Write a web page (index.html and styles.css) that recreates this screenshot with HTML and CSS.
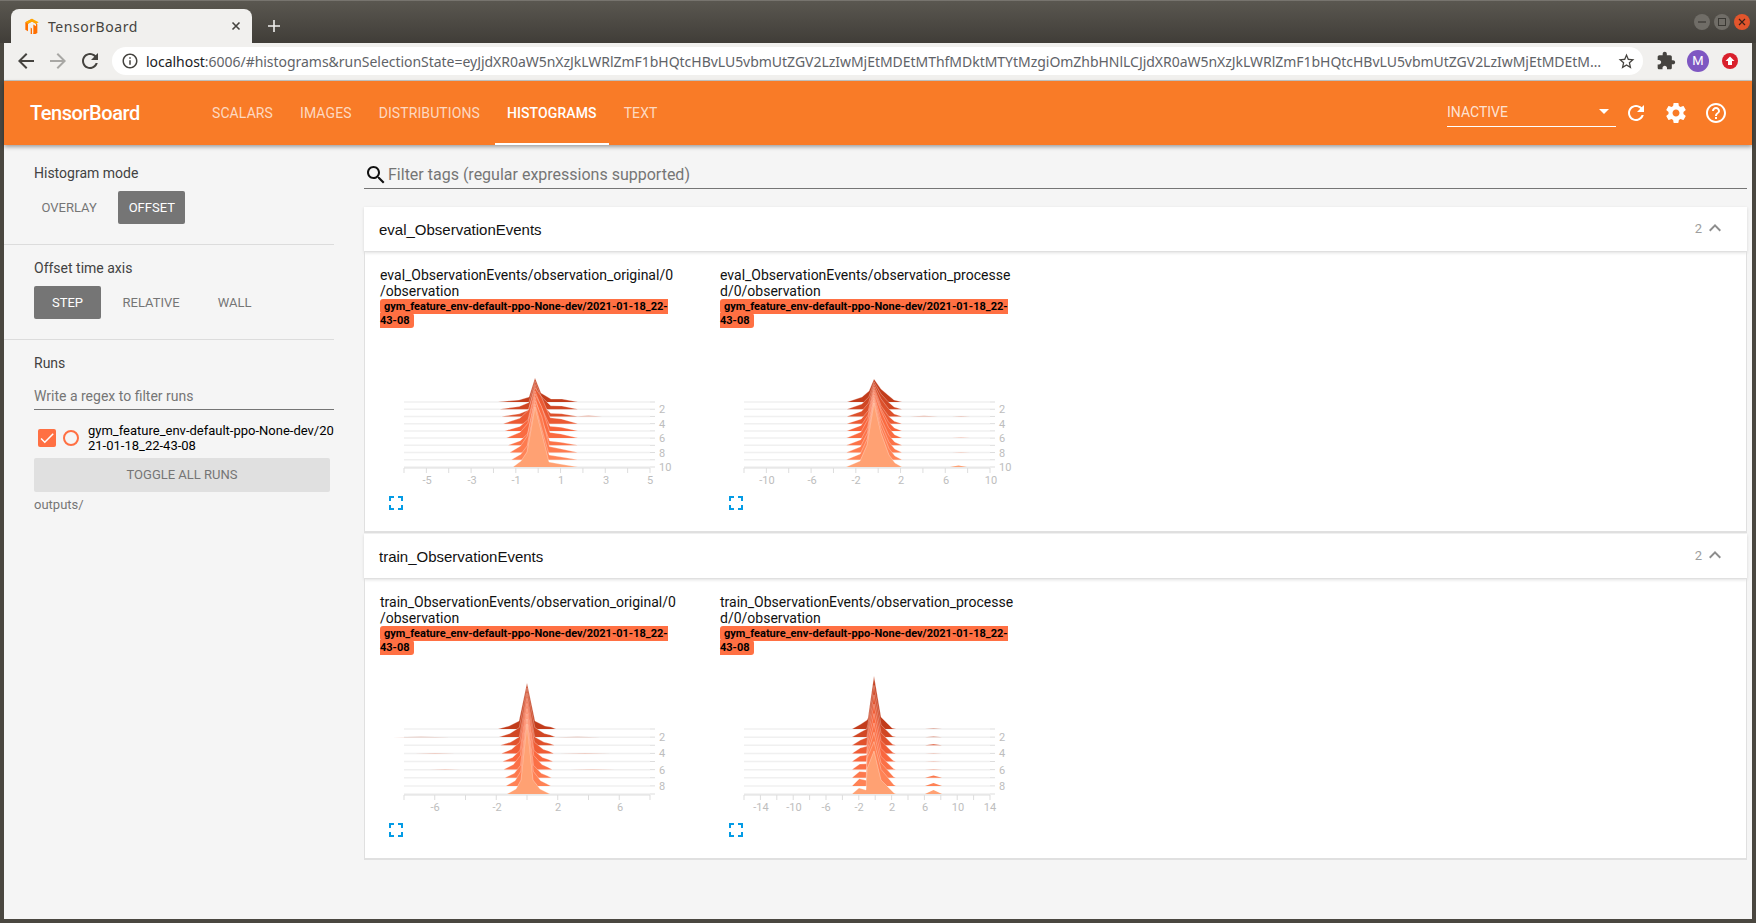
FILE: index.html
```html
<!DOCTYPE html>
<html lang="en">
<head>
  <meta charset="UTF-8" />
  <title>TensorBoard</title>
  <link rel="stylesheet" href="styles.css">
</head>
<body>
  <div class="titlebar">
    <div class="tab">
      <svg class="favicon" viewBox="0 0 24 24"><path fill="#ff6f00" d="M12 1 2 6.5v11l4 2.3v-11l6-3.4 6 3.4v3.4l-4-2.3v13.5l-2 1.2v-9l-2-1.2v11.4l2 1.2 8-4.6v-13z"/><path fill="#ffa800" d="M12 1 2 6.5l4 2.3 6-3.4 6 3.4 4-2.3z"/></svg>
      <span class="tab-title">TensorBoard</span>
      <svg class="tab-close" viewBox="0 0 10 10"><path d="M1.5 1.5l7 7M8.5 1.5l-7 7" stroke="#45433f" stroke-width="1.6"/></svg>
    </div>
    <svg class="new-tab" viewBox="0 0 12 12"><path d="M6 0v12M0 6h12" stroke="#f1f0ee" stroke-width="1.6"/></svg>
    <div class="win-controls">
      <span class="win-btn"><svg viewBox="0 0 10 10"><path d="M1 5h8" stroke="#3a3833" stroke-width="1.2"/></svg></span>
      <span class="win-btn"><svg viewBox="0 0 10 10"><rect x="1.5" y="1.5" width="7" height="7" fill="none" stroke="#3a3833" stroke-width="1"/></svg></span>
      <span class="win-btn close"><svg viewBox="0 0 10 10"><path d="M2 2l6 6M8 2l-6 6" stroke="#3a2018" stroke-width="1.2"/></svg></span>
    </div>
  </div>

  <div class="window">
    <div class="toolbar">
      <svg class="tb-icon" viewBox="0 0 24 24"><path fill="#45433f" d="M20 11H7.83l5.59-5.59L12 4l-8 8 8 8 1.41-1.41L7.83 13H20v-2z"/></svg>
      <svg class="tb-icon" viewBox="0 0 24 24"><path fill="#a8a7a4" d="M12 4l-1.41 1.41L16.17 11H4v2h12.17l-5.58 5.59L12 20l8-8z"/></svg>
      <svg class="tb-icon" viewBox="0 0 24 24"><path fill="#45433f" d="M17.65 6.35C16.2 4.9 14.21 4 12 4c-4.42 0-7.99 3.58-7.99 8s3.57 8 7.99 8c3.73 0 6.84-2.55 7.73-6h-2.08c-.82 2.33-3.04 4-5.65 4-3.31 0-6-2.69-6-6s2.69-6 6-6c1.66 0 3.14.69 4.22 1.78L13 11h7V4l-2.35 2.35z"/></svg>
      <div class="omnibox">
        <svg class="info-icon" viewBox="0 0 24 24"><path fill="#45433f" d="M11 7h2v2h-2zm0 4h2v6h-2zm1-9C6.48 2 2 6.48 2 12s4.48 10 10 10 10-4.48 10-10S17.52 2 12 2zm0 18c-4.41 0-8-3.59-8-8s3.59-8 8-8 8 3.59 8 8-3.59 8-8 8z"/></svg>
        <div class="url"><span class="host">localhost</span>:6006/#histograms&amp;runSelectionState=eyJjdXR0aW5nXzJkLWRlZmF1bHQtcHBvLU5vbmUtZGV2LzIwMjEtMDEtMThfMDktMTYtMzgiOmZhbHNlLCJjdXR0aW5nXzJkLWRlZmF1bHQtcHBvLU5vbmUtZGV2LzIwMjEtMDEtM…</div>
        <svg class="star-icon" viewBox="0 0 24 24"><path fill="#45433f" d="M22 9.24l-7.19-.62L12 2 9.19 8.63 2 9.24l5.46 4.73L5.82 21 12 17.27 18.18 21l-1.63-7.03L22 9.24zM12 15.4l-3.76 2.27 1-4.28-3.32-2.88 4.38-.38L12 6.1l1.71 4.04 4.38.38-3.32 2.88 1 4.28L12 15.4z"/></svg>
      </div>
      <svg class="puzzle-icon" viewBox="0 0 24 24"><path fill="#45433f" d="M20.5 11H19V7c0-1.1-.9-2-2-2h-4V3.5C13 2.12 11.88 1 10.5 1S8 2.12 8 3.5V5H4c-1.1 0-1.99.9-1.99 2v3.8H3.5c1.49 0 2.7 1.21 2.7 2.7s-1.21 2.7-2.7 2.7H2V20c0 1.1.9 2 2 2h3.8v-1.5c0-1.49 1.21-2.7 2.7-2.7 1.49 0 2.7 1.21 2.7 2.7V22H17c1.1 0 2-.9 2-2v-4h1.5c1.38 0 2.5-1.12 2.5-2.5S21.88 11 20.5 11z"/></svg>
      <span class="avatar">M</span>
      <svg class="update-icon" viewBox="0 0 16 16"><circle cx="8" cy="8" r="8" fill="#d9202c"/><path fill="#fff" d="M8 3.5 12.5 8H10v4H6V8H3.5z"/></svg>
    </div>

    <header class="tb-header">
      <div class="brand">TensorBoard</div>
      <nav class="tb-tabs">
        <a class="tb-tab">SCALARS</a>
        <a class="tb-tab">IMAGES</a>
        <a class="tb-tab">DISTRIBUTIONS</a>
        <a class="tb-tab active">HISTOGRAMS</a>
        <a class="tb-tab">TEXT</a>
      </nav>
      <div class="tb-right">
        <div class="plugin-select">
          <span>INACTIVE</span>
          <svg class="caret" viewBox="0 0 10 5"><path fill="#fff" d="M0 0l5 5 5-5z"/></svg>
        </div>
        <svg class="hd-icon" viewBox="0 0 24 24"><path fill="#fff" d="M17.65 6.35C16.2 4.9 14.21 4 12 4c-4.42 0-7.99 3.58-7.99 8s3.57 8 7.99 8c3.73 0 6.84-2.55 7.73-6h-2.08c-.82 2.33-3.04 4-5.65 4-3.31 0-6-2.69-6-6s2.69-6 6-6c1.66 0 3.14.69 4.22 1.78L13 11h7V4l-2.35 2.35z"/></svg>
        <svg class="hd-icon" viewBox="0 0 24 24"><path fill="#fff" d="M19.43 12.98c.04-.32.07-.64.07-.98s-.03-.66-.07-.98l2.11-1.65c.19-.15.24-.42.12-.64l-2-3.46c-.12-.22-.39-.3-.61-.22l-2.49 1c-.52-.4-1.08-.73-1.69-.98l-.38-2.65C14.46 2.18 14.25 2 14 2h-4c-.25 0-.46.18-.49.42l-.38 2.65c-.61.25-1.17.59-1.69.98l-2.49-1c-.23-.09-.49 0-.61.22l-2 3.46c-.13.22-.07.49.12.64l2.11 1.65c-.04.32-.07.65-.07.98s.03.66.07.98l-2.11 1.65c-.19.15-.24.42-.12.64l2 3.46c.12.22.39.3.61.22l2.49-1c.52.4 1.08.73 1.69.98l.38 2.65c.03.24.24.42.49.42h4c.25 0 .46-.18.49-.42l.38-2.65c.61-.25 1.17-.59 1.69-.98l2.49 1c.23.09.49 0 .61-.22l2-3.46c.12-.22.07-.49-.12-.64l-2.11-1.65zM12 15.5c-1.93 0-3.5-1.57-3.5-3.5s1.57-3.5 3.5-3.5 3.5 1.57 3.5 3.5-1.57 3.5-3.5 3.5z"/></svg>
        <svg class="hd-icon" viewBox="0 0 24 24"><path fill="#fff" d="M11 18h2v-2h-2v2zm1-16C6.48 2 2 6.48 2 12s4.48 10 10 10 10-4.48 10-10S17.52 2 12 2zm0 18c-4.41 0-8-3.59-8-8s3.59-8 8-8 8 3.59 8 8-3.59 8-8 8zm0-14c-2.21 0-4 1.79-4 4h2c0-1.1.9-2 2-2s2 .9 2 2c0 2-3 1.75-3 5h2c0-2.25 3-2.5 3-5 0-2.21-1.79-4-4-4z"/></svg>
      </div>
    </header>

    <div class="content">
      <aside class="sidebar">
        <section class="sb-section">
          <div class="sb-label">Histogram mode</div>
          <div class="btn-group">
            <button class="btn">OVERLAY</button>
            <button class="btn selected">OFFSET</button>
          </div>
        </section>
        <section class="sb-section">
          <div class="sb-label">Offset time axis</div>
          <div class="btn-group">
            <button class="btn selected">STEP</button>
            <button class="btn">RELATIVE</button>
            <button class="btn">WALL</button>
          </div>
        </section>
        <section class="sb-runs">
          <div class="sb-label">Runs</div>
          <div class="run-filter">Write a regex to filter runs</div>
          <div class="run-row">
            <span class="run-check"><svg viewBox="0 0 24 24"><path fill="#fff" d="M9 16.17L4.83 12l-1.42 1.41L9 19 21 7l-1.41-1.41z"/></svg></span>
            <span class="run-radio"></span>
            <span class="run-name">gym_feature_env-default-ppo-None-dev/2021-01-18_22-43-08</span>
          </div>
          <button class="toggle-runs">TOGGLE ALL RUNS</button>
          <div class="run-dir">outputs/</div>
        </section>
      </aside>

      <main class="main">
        <div class="tag-filter">
          <svg class="search-icon" viewBox="3 3 18 18"><path fill="#111" d="M15.5 14h-.79l-.28-.27C15.41 12.59 16 11.11 16 9.5 16 5.91 13.09 3 9.5 3S3 5.91 3 9.5 5.91 16 9.5 16c1.61 0 3.09-.59 4.23-1.57l.27.28v.79l5 4.99L20.49 19l-4.99-5zm-6 0C7.01 14 5 11.99 5 9.5S7.01 5 9.5 5 14 7.01 14 9.5 11.99 14 9.5 14z"/></svg>
          <span>Filter tags (regular expressions supported)</span>
        </div>

        <section class="card">
          <div class="card-head">
            <span class="card-name">eval_ObservationEvents</span>
            <span class="card-count">2</span>
            <svg class="chevron" viewBox="6 8 12 8"><path fill="#8d8d8d" d="M7.41 15.41L12 10.83l4.59 4.58L18 14l-6-6-6 6z"/></svg>
          </div>
          <div class="card-body">
            <div class="tile">
              <div class="tile-title">eval_ObservationEvents/observation_original/0<wbr>/observation</div>
              <div class="tile-run"><span>gym_feature_env-default-ppo-None-dev/2021-01-18_22-43-08</span></div>
              <svg class="chart" data-chart="evalOriginal" width="300" height="161"></svg>
              <svg class="expand" viewBox="5 5 14 14"><path fill="#039be5" d="M7 14H5v5h5v-2H7v-3zm-2-4h2V7h3V5H5v5zm12 7h-3v2h5v-5h-2v3zM14 5v2h3v3h2V5h-5z"/></svg>
            </div>
            <div class="tile">
              <div class="tile-title">eval_ObservationEvents/observation_processed/0/observation</div>
              <div class="tile-run"><span>gym_feature_env-default-ppo-None-dev/2021-01-18_22-43-08</span></div>
              <svg class="chart" data-chart="evalProcessed" width="300" height="161"></svg>
              <svg class="expand" viewBox="5 5 14 14"><path fill="#039be5" d="M7 14H5v5h5v-2H7v-3zm-2-4h2V7h3V5H5v5zm12 7h-3v2h5v-5h-2v3zM14 5v2h3v3h2V5h-5z"/></svg>
            </div>
          </div>
        </section>

        <section class="card">
          <div class="card-head">
            <span class="card-name">train_ObservationEvents</span>
            <span class="card-count">2</span>
            <svg class="chevron" viewBox="6 8 12 8"><path fill="#8d8d8d" d="M7.41 15.41L12 10.83l4.59 4.58L18 14l-6-6-6 6z"/></svg>
          </div>
          <div class="card-body">
            <div class="tile">
              <div class="tile-title">train_ObservationEvents/observation_original/0<wbr>/observation</div>
              <div class="tile-run"><span>gym_feature_env-default-ppo-None-dev/2021-01-18_22-43-08</span></div>
              <svg class="chart" data-chart="trainOriginal" width="300" height="161"></svg>
              <svg class="expand" viewBox="5 5 14 14"><path fill="#039be5" d="M7 14H5v5h5v-2H7v-3zm-2-4h2V7h3V5H5v5zm12 7h-3v2h5v-5h-2v3zM14 5v2h3v3h2V5h-5z"/></svg>
            </div>
            <div class="tile">
              <div class="tile-title">train_ObservationEvents/observation_processed/0/observation</div>
              <div class="tile-run"><span>gym_feature_env-default-ppo-None-dev/2021-01-18_22-43-08</span></div>
              <svg class="chart" data-chart="trainProcessed" width="300" height="161"></svg>
              <svg class="expand" viewBox="5 5 14 14"><path fill="#039be5" d="M7 14H5v5h5v-2H7v-3zm-2-4h2V7h3V5H5v5zm12 7h-3v2h5v-5h-2v3zM14 5v2h3v3h2V5h-5z"/></svg>
            </div>
          </div>
        </section>
      </main>
    </div>
  </div>

  <script src="charts.js"></script>
</body>
</html>
```

FILE: styles.css
```css
* {
  box-sizing: border-box;
}
body {
  margin: 0;
  height: 923px;
  overflow: hidden;
  display: flex;
  flex-direction: column;
  background: #4a4740;
  font-family: Roboto, sans-serif;
}

/* browser chrome */
.titlebar {
  height: 43px;
  flex: none;
  display: flex;
  align-items: flex-end;
  padding-left: 11px;
  border-top: 1px solid #77746e;
  background: linear-gradient(#5a5750, #403d38);
}
.tab {
  width: 241px;
  height: 34px;
  display: flex;
  align-items: center;
  padding: 0 11px 0 13px;
  background: #f1f0ee;
  border-radius: 8px 8px 0 0;
}
.favicon {
  width: 16px;
  height: 16px;
}
.tab-title {
  flex: 1;
  margin-left: 8px;
  font-family: "Noto Sans", sans-serif;
  font-size: 14px;
  letter-spacing: 0.55px;
  color: #45433f;
}
.tab-close {
  width: 10px;
  height: 10px;
}
.new-tab {
  width: 12px;
  height: 12px;
  margin: 0 0 11px 16px;
}
.win-controls {
  margin-left: auto;
  align-self: center;
  display: flex;
  gap: 4px;
  padding-right: 6px;
}
.win-btn {
  width: 16px;
  height: 16px;
  display: flex;
  align-items: center;
  justify-content: center;
  border-radius: 50%;
  background: #706d67;
}
.win-btn svg {
  width: 10px;
  height: 10px;
}
.win-btn.close {
  background: #e2552c;
}

.window {
  flex: 1;
  margin: 0 4px 4px;
  display: flex;
  flex-direction: column;
  background: #f5f5f5;
  min-height: 0;
}
.toolbar {
  height: 38px;
  flex: none;
  display: flex;
  align-items: center;
  padding: 0 0 1px 10px;
  background: #f1f0ee;
  border-bottom: 1px solid #c6c6c4;
}
.tb-icon {
  width: 24px;
  height: 24px;
  margin-right: 8px;
}
.omnibox {
  width: 1531px;
  height: 28px;
  margin-left: 2px;
  display: flex;
  align-items: center;
  padding: 0 7px 0 9px;
  background: #fff;
  border-radius: 14px;
}
.info-icon {
  width: 18px;
  height: 18px;
  flex: none;
}
.url {
  flex: 1;
  min-width: 0;
  margin-left: 7px;
  white-space: nowrap;
  font-family: "Noto Sans", sans-serif;
  font-size: 14px;
  letter-spacing: -0.033px;
  color: #5f6368;
}
.host {
  color: #202124;
}
.star-icon {
  width: 19px;
  height: 19px;
  flex: none;
  margin-left: 10px;
}
.puzzle-icon {
  width: 20px;
  height: 20px;
  margin-left: 13px;
}
.avatar {
  width: 22px;
  height: 22px;
  margin-left: 11px;
  border-radius: 50%;
  background: #7e57c2;
  color: #fff;
  font-size: 13px;
  line-height: 22px;
  text-align: center;
}
.update-icon {
  width: 16px;
  height: 16px;
  margin-left: 13px;
}

/* tensorboard header */
.tb-header {
  height: 64px;
  flex: none;
  display: flex;
  position: relative;
  z-index: 2;
  padding-left: 26px;
  background: #f97b27;
  box-shadow: 0 2px 4px rgba(0, 0, 0, 0.35);
}
.brand {
  width: 170px;
  font-size: 20px;
  font-weight: 500;
  line-height: 64px;
  letter-spacing: -0.45px;
  color: #fff;
}
.tb-tabs {
  display: flex;
  gap: 3px;
}
.tb-tab {
  padding: 0 12px;
  font-size: 14px;
  line-height: 64px;
  letter-spacing: 0.1px;
  color: rgba(255, 255, 255, 0.72);
}
.tb-tab.active {
  font-weight: 500;
  color: #fff;
  border-bottom: 2px solid #fff;
}
.tb-right {
  margin-left: auto;
  display: flex;
  align-items: center;
  padding-right: 24px;
}
.plugin-select {
  width: 169px;
  height: 29px;
  margin-top: -2px;
  display: flex;
  align-items: center;
  justify-content: space-between;
  padding-right: 7px;
  border-bottom: 1px solid #fff;
  font-size: 14px;
  color: rgba(255, 255, 255, 0.8);
}
.caret {
  width: 10px;
  height: 5px;
}
.hd-icon {
  width: 24px;
  height: 24px;
  margin-left: 16px;
}
.plugin-select + .hd-icon {
  margin-left: 8px;
}

/* page body */
.content {
  flex: 1;
  display: flex;
  min-height: 0;
}
.sidebar {
  width: 330px;
  flex: none;
}
.sb-section {
  padding: 19px 0 20px 30px;
  border-bottom: 1px solid #dcdcdc;
}
.sb-section + .sb-section {
  padding-top: 14px;
}
.sb-label {
  font-size: 14px;
  line-height: 18px;
  color: #424242;
}
.btn-group {
  display: flex;
  gap: 14px;
  margin-top: 9px;
}
.btn {
  min-width: 67px;
  height: 33px;
  padding: 0 7.5px;
  border: 0;
  border-radius: 2px;
  background: none;
  font-family: Roboto, sans-serif;
  font-size: 13px;
  color: #757575;
}
.btn.selected {
  background: #757575;
  color: #fff;
}
.sb-runs {
  padding: 14px 0 0 30px;
}
.run-filter {
  height: 27px;
  margin-top: 11px;
  border-bottom: 1px solid #757575;
  font-size: 14px;
  line-height: 26px;
  color: #757575;
}
.run-row {
  display: flex;
  align-items: center;
  margin-top: 13px;
  padding-left: 4px;
}
.run-check {
  width: 18px;
  height: 18px;
  flex: none;
  border-radius: 2px;
  background: #ff7043;
}
.run-check svg {
  display: block;
  width: 18px;
  height: 18px;
}
.run-radio {
  width: 16px;
  height: 16px;
  flex: none;
  margin-left: 7px;
  border: 2px solid #ff7043;
  border-radius: 50%;
}
.run-name {
  margin-left: 9px;
  font-size: 13px;
  line-height: 15px;
  color: #000;
  word-break: break-all;
}
.toggle-runs {
  display: block;
  width: 296px;
  height: 34px;
  margin-top: 5px;
  padding-bottom: 2px;
  border: 0;
  border-radius: 2px;
  background: #e0e0e0;
  font-family: Roboto, sans-serif;
  font-size: 13px;
  color: #757575;
}
.run-dir {
  margin-top: 5px;
  font-size: 13px;
  line-height: 16px;
  color: #757575;
}

.main {
  flex: 1;
  min-width: 0;
  padding: 0 5px 0 30px;
}
.tag-filter {
  height: 44px;
  display: flex;
  align-items: flex-end;
  padding: 0 0 3px 3px;
  border-bottom: 1px solid #757575;
  font-size: 16px;
  line-height: 20px;
  color: #757575;
}
.search-icon {
  width: 18px;
  height: 18px;
  margin: 0 3px 1px 0;
}
.card {
  background: #fff;
}
.tag-filter + .card {
  margin-top: 18px;
}
.card + .card {
  margin-top: 1px;
}
.card-head {
  height: 45px;
  display: flex;
  align-items: center;
  padding: 0 26px 0 15px;
  border-bottom: 1px solid #e0e0e0;
  box-shadow: 0 1px 3px rgba(0, 0, 0, 0.12);
}
.card-name {
  flex: 1;
  font-family: "Liberation Sans", Arial, sans-serif;
  font-size: 15px;
  line-height: 17px;
  color: #111;
}
.card-count {
  margin-bottom: 1px;
  font-size: 13px;
  color: #9e9e9e;
}
.chevron {
  width: 12px;
  height: 8px;
  margin: 0 0 2px 7px;
}
.card-body {
  display: flex;
  gap: 42px;
  padding: 15px 0 21px 15px;
  border: 1px solid #e0e0e0;
  border-top: 0;
  border-bottom-width: 2px;
}
.tile {
  width: 298px;
}
.tile-title {
  font-size: 14px;
  line-height: 16px;
  color: #111;
  word-break: break-all;
}
.tile-run {
  width: 296px;
  margin: 1px 0;
  font-size: 11px;
  font-weight: 700;
  line-height: 14px;
  color: #000;
}
.tile-run span {
  padding: 1px 4px;
  border-radius: 3px;
  background: #ff7043;
}
.chart {
  display: block;
}
.expand {
  display: block;
  width: 14px;
  height: 14px;
  margin: 6px 0 0 9px;
}
```

FILE: charts.js
```js
// histogram offset charts, one ridge per step, back to front
const SVG_NS = 'http://www.w3.org/2000/svg';
const LEFT = 24;
const RIGHT = 270;
const TOP = 73;
const BOTTOM = 138;

// back and front are [dx, height] pairs from the peak, blended row by row
const charts = {
  evalOriginal: {
    center: 155,
    labels: [['-5', 47], ['-3', 92], ['-1', 136], ['1', 181], ['3', 226], ['5', 270]],
    ticks: 11,
    steps: ['2', '4', '6', '8', '10'],
    rows: 10,
    back: [-37, 0, -16, 2, -6, 5, 0, 24, 6, 9, 16, 3, 27, 3, 43, 0],
    front: [-22, 0, -14, 6, -8, 15, 0, 60, 7, 33, 14, 5, 25, 3, 43, 0],
    wobble: [1, 1.1, 0.9, 1.6, 1.2, 1.4, 1, 1.3, 1, 1],
    faint: [[2, 195, 222, 0.9]]
  },
  evalProcessed: {
    center: 154,
    labels: [['-10', 47], ['-6', 92], ['-2', 136], ['2', 181], ['6', 226], ['10', 271]],
    ticks: 11,
    steps: ['2', '4', '6', '8', '10'],
    rows: 10,
    back: [-27, 0, -12, 5, -5, 11, 0, 23, 7, 13, 14, 7, 20, 2, 28, 0],
    front: [-28, 0, -14, 6, -7, 22, 0, 64, 7, 34, 15, 12, 21, 4, 28, 0],
    wobble: [1, 1, 1, 0.9, 1, 1.1, 1, 1, 1, 1],
    faint: [[2, 190, 218, 0.7], [2, 232, 250, 0.5], [5, 232, 250, 0.5], [7, 232, 250, 0.5], [9, 230, 247, 1.6]]
  },
  trainOriginal: {
    center: 147,
    labels: [['-6', 55], ['-2', 117], ['2', 178], ['6', 240]],
    ticks: 8,
    steps: ['2', '4', '6', '8'],
    rows: 9,
    back: [-29, 0, -18, 3, -8, 8, 0, 46, 8, 8, 18, 3, 24, 2, 29, 0],
    front: [-20, 0, -11, 5, -6, 14, 0, 70, 6, 14, 13, 5, 19, 2, 23, 0],
    wobble: [1, 1.1, 0.9, 1.1, 1, 1.2, 1, 1.1, 1],
    faint: [[1, 12, 70, 0.4], [1, 175, 220, 0.4], [3, 35, 75, 0.4], [3, 180, 230, 0.4], [5, 50, 80, 0.4], [5, 190, 235, 0.4]]
  },
  trainProcessed: {
    center: 154,
    labels: [['-14', 41], ['-10', 74], ['-6', 106], ['-2', 139], ['2', 172], ['6', 205], ['10', 238], ['14', 270]],
    ticks: 15,
    steps: ['2', '4', '6', '8'],
    rows: 9,
    back: [-22, 0, -13, 5, -7, 9, -6, 11, 0, 53, 7, 12, 14, 5, 18, 1, 22, 0],
    front: [-22, 0, -15, 6, -8, 4, -7, 25, 0, 43, 7, 14, 16, 5, 20, 1, 22, 0],
    wobble: [1, 1, 1, 1, 1, 1, 1.1, 1.2, 1],
    faint: [[0, 205, 222, 0.8], [1, 205, 222, 0.8], [2, 205, 222, 1], [3, 205, 222, 0.5], [4, 205, 222, 0.5], [5, 205, 222, 0.6], [6, 205, 222, 2.2], [7, 205, 222, 3], [8, 205, 222, 4]]
  }
};

function el(name, attrs, text) {
  const node = document.createElementNS(SVG_NS, name);
  Object.keys(attrs).forEach(k => node.setAttribute(k, attrs[k]));
  if (text) node.textContent = text;
  return node;
}

function mix(a, b, t) {
  const out = [0, 1, 2].map(i => Math.round(a[i] + (b[i] - a[i]) * t));
  return `rgb(${out.join(',')})`;
}

function rowColor(t) {
  const stops = [[0, [194, 60, 27]], [0.45, [249, 100, 59]], [0.88, [255, 130, 85]], [1, [255, 161, 115]]];
  for (let i = 1; i < stops.length; i++) {
    if (t <= stops[i][0]) {
      const span = stops[i][0] - stops[i - 1][0];
      return mix(stops[i - 1][1], stops[i][1], (t - stops[i - 1][0]) / span);
    }
  }
  return mix(stops[2][1], stops[3][1], 1);
}

function ridge(cfg, row, base) {
  const t = row / (cfg.rows - 1);
  const pts = [];
  for (let i = 0; i < cfg.front.length; i += 2) {
    const dx = cfg.back[i] + (cfg.front[i] - cfg.back[i]) * t;
    let h = cfg.back[i + 1] + (cfg.front[i + 1] - cfg.back[i + 1]) * t;
    if (dx !== 0) h *= cfg.wobble[row];
    pts.push(`${(cfg.center + dx).toFixed(1)},${(base - h).toFixed(1)}`);
  }
  return 'M' + pts.join('L');
}

function draw(svg) {
  const cfg = charts[svg.dataset.chart];
  const step = (BOTTOM - TOP) / (cfg.rows - 1);

  for (let r = 0; r < cfg.rows; r++) {
    const base = TOP + r * step;
    const color = rowColor(r / (cfg.rows - 1));
    svg.appendChild(el('path', { d: `M${LEFT} ${base}H${RIGHT}`, stroke: '#f0f0f0', 'stroke-width': 1.5 }));
    svg.appendChild(el('path', { d: `M${RIGHT} ${base}h5`, stroke: '#ddd' }));
    svg.appendChild(el('path', { d: ridge(cfg, r, base), fill: color, stroke: '#fff', 'stroke-opacity': 0.3 }));
    cfg.faint.filter(f => f[0] === r).forEach(f => {
      const mid = (f[1] + f[2]) / 2;
      svg.appendChild(el('path', {
        d: `M${f[1]} ${base}L${mid} ${base - f[3]}L${f[2]} ${base}Z`,
        fill: color,
        'fill-opacity': f[3] < 1 ? 0.45 : 1
      }));
    });
  }

  // x axis
  const bottom = BOTTOM + 1;
  svg.appendChild(el('path', { d: `M${LEFT} ${bottom}H${RIGHT}`, stroke: '#ddd' }));
  const gap = (RIGHT - LEFT) / cfg.ticks;
  for (let i = 0; i <= cfg.ticks; i++) {
    svg.appendChild(el('path', { d: `M${LEFT + i * gap} ${bottom}v5`, stroke: '#ddd' }));
  }
  cfg.labels.forEach(l => {
    svg.appendChild(el('text', { x: l[1], y: bottom + 16, 'text-anchor': 'middle', fill: '#bdbdbd', 'font-size': 11 }, l[0]));
  });

  // step labels on the right, every other row
  cfg.steps.forEach((s, i) => {
    const y = TOP + (i * 2 + 1) * step;
    svg.appendChild(el('text', { x: 279, y: y + 4, fill: '#bdbdbd', 'font-size': 11 }, s));
  });
}

document.querySelectorAll('.chart').forEach(draw);
```
